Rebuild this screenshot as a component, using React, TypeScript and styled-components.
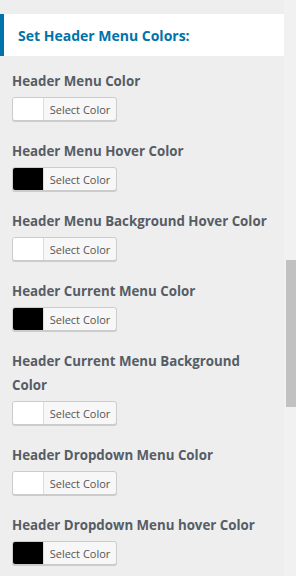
import React from 'react';
import styled, { createGlobalStyle } from 'styled-components';

const GlobalStyle = createGlobalStyle`
  html, body {
    margin: 0;
    padding: 0;
    background: #eeeeee;
  }
  body {
    font-family: "Open Sans", "Noto Sans", sans-serif;
  }
`;

const Page = styled.div`
  display: flex;
  width: 296px;
  height: 576px;
  overflow: hidden;
  background: #eeeeee;
`;

const Panel = styled.div`
  width: 284px;
  flex-shrink: 0;
  padding-top: 14px;
`;

const SectionHeader = styled.div`
  height: 42px;
  box-sizing: border-box;
  background: #fff;
  border-left: 4px solid #0073aa;
  padding-left: 14px;
  display: flex;
  align-items: center;
  color: #0073aa;
  font-size: 14px;
  font-weight: 700;
  margin-bottom: 13px;
`;

const Control = styled.div`
  padding: 0 12px 18px;
`;

const Label = styled.div`
  color: #555d66;
  font-size: 13.3px;
  font-weight: 700;
  line-height: 24px;
  margin-bottom: 4px;
`;

const ColorButton = styled.button`
  display: flex;
  align-items: stretch;
  width: 105px;
  height: 24px;
  padding: 0;
  border: 1px solid #cccccc;
  border-radius: 3px;
  background: #f7f7f7;
  box-shadow: 0 1px 0 #cccccc;
  overflow: hidden;
  font-family: inherit;
  cursor: pointer;
`;

const Swatch = styled.span<{ $color: string }>`
  width: 30px;
  flex-shrink: 0;
  background: ${({ $color }) => $color};
  border-right: 1px solid #dddddd;
`;

const ButtonText = styled.span`
  flex: 1;
  display: flex;
  align-items: center;
  justify-content: center;
  font-size: 11px;
  color: #555555;
`;

const Track = styled.div`
  flex: 1;
  background: #f1f1f1;
  padding: 260px 0 0 2px;
`;

const Thumb = styled.div`
  height: 147px;
  background: #c1c1c1;
`;

const controls = [
  { label: 'Header Menu Color', color: '#ffffff' },
  { label: 'Header Menu Hover Color', color: '#000000' },
  { label: 'Header Menu Background Hover Color', color: '#ffffff' },
  { label: 'Header Current Menu Color', color: '#000000' },
  { label: 'Header Current Menu Background Color', color: '#ffffff' },
  { label: 'Header Dropdown Menu Color', color: '#ffffff' },
  { label: 'Header Dropdown Menu hover Color', color: '#000000' },
];

const App: React.FC = () => {
  return (
    <>
      <GlobalStyle />
      <Page>
        <Panel>
          <SectionHeader>Set Header Menu Colors:</SectionHeader>
          {controls.map((c) => (
            <Control key={c.label}>
              <Label>{c.label}</Label>
              <ColorButton type="button">
                <Swatch $color={c.color} />
                <ButtonText>Select Color</ButtonText>
              </ColorButton>
            </Control>
          ))}
        </Panel>
        <Track>
          <Thumb />
        </Track>
      </Page>
    </>
  );
};

export default App;
